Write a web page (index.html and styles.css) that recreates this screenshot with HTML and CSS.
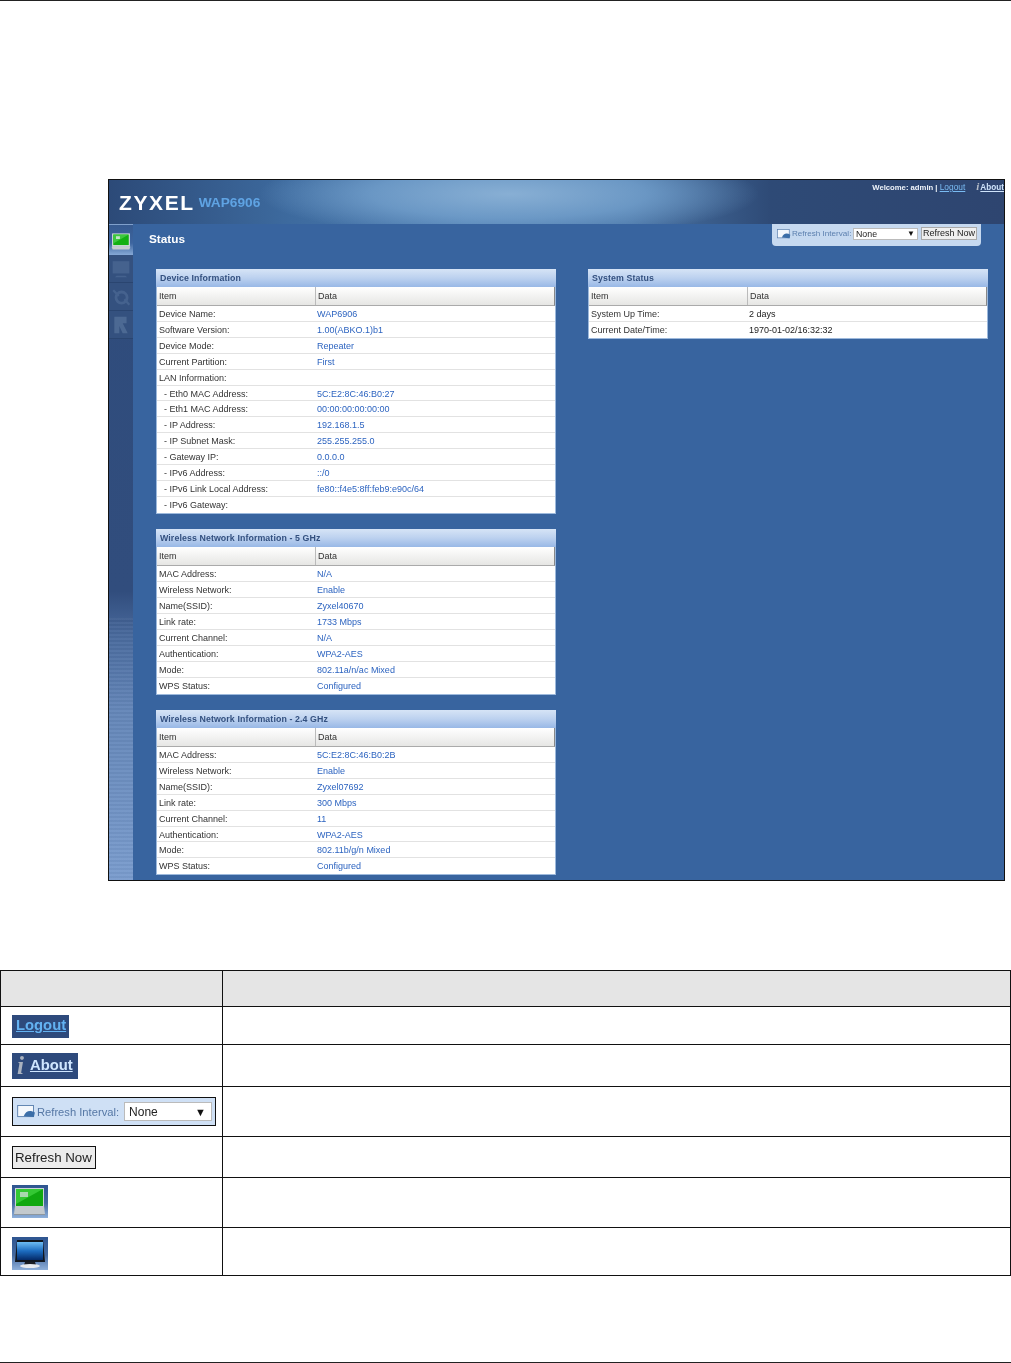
FILE: index.html
```html
<!DOCTYPE html>
<html lang="en">
<head>
<meta charset="utf-8">
<title>WAP6906 Status</title>
<link rel="stylesheet" href="styles.css">
</head>
<body>
<div class="page">
  <div class="top-rule"></div>
  <div class="shot">
    <header class="banner">
      <div class="brand"><span class="logo">ZYXEL</span><span class="model">WAP6906</span></div>
      <div class="welcome">Welcome: admin | <a class="lnk">Logout</a><span class="info">i</span><a class="about">About</a></div>
    </header>
    <div class="body">
      <aside class="side">
        <div class="nav nav-on">
          <svg width="20" height="19" viewBox="0 0 36 33"><rect x="2" y="2" width="32" height="24" fill="#d9dee2"/><rect x="4" y="4" width="28" height="19" fill="#12b012"/><path d="M4 4h28L4 20z" fill="#3fc83f"/><rect x="9" y="7" width="7" height="5" fill="#c3e4c8"/><path d="M1 26h34l-2 5H3z" fill="#c6ccd0"/></svg>
        </div>
        <div class="nav">
          <svg class="faint" width="20" height="22" viewBox="0 0 36 36"><rect x="3" y="4" width="30" height="22" fill="#56739e"/><path d="M10 30h16l3 3H7z" fill="#56739e"/></svg>
        </div>
        <div class="nav">
          <svg class="faint" width="20" height="22" viewBox="0 0 36 36"><circle cx="19" cy="19" r="10" fill="none" stroke="#56739e" stroke-width="5"/><path d="M4 6l10 10M24 22l9 10" stroke="#56739e" stroke-width="4"/></svg>
        </div>
        <div class="nav">
          <svg class="faint" width="20" height="22" viewBox="0 0 36 36"><path d="M6 3h22v12h-7l9 18h-9l-6-13v13H6z" fill="#6582a8"/></svg>
        </div>
      </aside>
      <main class="main">
        <div class="title-row">
          <h1 class="title">Status</h1>
          <div class="refresh">
            <svg class="ref-ico" width="14" height="10" viewBox="0 0 20 14"><rect x=".5" y=".5" width="17" height="12" fill="#f3f7fc" stroke="#5a7fae"/><path d="M7 12c2-6 7-7 12-4l-1 5z" fill="#3b6ea8"/></svg>
            <span class="ref-label">Refresh Interval:</span>
            <div class="sel"><span>None</span><span class="arrow">▼</span></div>
            <div class="btn">Refresh Now</div>
          </div>
        </div>
        <div class="cols">
          <div class="col">
            <section class="panel">
              <h2 class="panel-title">Device Information</h2>
              <div class="head"><div>Item</div><div>Data</div></div>
              <div class="row"><div>Device Name:</div><div class="val">WAP6906</div></div>
              <div class="row"><div>Software Version:</div><div class="val">1.00(ABKO.1)b1</div></div>
              <div class="row"><div>Device Mode:</div><div class="val">Repeater</div></div>
              <div class="row"><div>Current Partition:</div><div class="val">First</div></div>
              <div class="row"><div>LAN Information:</div><div class="val"></div></div>
              <div class="row"><div class="sub">- Eth0 MAC Address:</div><div class="val">5C:E2:8C:46:B0:27</div></div>
              <div class="row"><div class="sub">- Eth1 MAC Address:</div><div class="val">00:00:00:00:00:00</div></div>
              <div class="row"><div class="sub">- IP Address:</div><div class="val">192.168.1.5</div></div>
              <div class="row"><div class="sub">- IP Subnet Mask:</div><div class="val">255.255.255.0</div></div>
              <div class="row"><div class="sub">- Gateway IP:</div><div class="val">0.0.0.0</div></div>
              <div class="row"><div class="sub">- IPv6 Address:</div><div class="val">::/0</div></div>
              <div class="row"><div class="sub">- IPv6 Link Local Address:</div><div class="val">fe80::f4e5:8ff:feb9:e90c/64</div></div>
              <div class="row"><div class="sub">- IPv6 Gateway:</div><div class="val"></div></div>
            </section>
            <section class="panel">
              <h2 class="panel-title">Wireless Network Information - 5 GHz</h2>
              <div class="head"><div>Item</div><div>Data</div></div>
              <div class="row"><div>MAC Address:</div><div class="val">N/A</div></div>
              <div class="row"><div>Wireless Network:</div><div class="val">Enable</div></div>
              <div class="row"><div>Name(SSID):</div><div class="val">Zyxel40670</div></div>
              <div class="row"><div>Link rate:</div><div class="val">1733 Mbps</div></div>
              <div class="row"><div>Current Channel:</div><div class="val">N/A</div></div>
              <div class="row"><div>Authentication:</div><div class="val">WPA2-AES</div></div>
              <div class="row"><div>Mode:</div><div class="val">802.11a/n/ac Mixed</div></div>
              <div class="row"><div>WPS Status:</div><div class="val">Configured</div></div>
            </section>
            <section class="panel">
              <h2 class="panel-title">Wireless Network Information - 2.4 GHz</h2>
              <div class="head"><div>Item</div><div>Data</div></div>
              <div class="row"><div>MAC Address:</div><div class="val">5C:E2:8C:46:B0:2B</div></div>
              <div class="row"><div>Wireless Network:</div><div class="val">Enable</div></div>
              <div class="row"><div>Name(SSID):</div><div class="val">Zyxel07692</div></div>
              <div class="row"><div>Link rate:</div><div class="val">300 Mbps</div></div>
              <div class="row"><div>Current Channel:</div><div class="val">11</div></div>
              <div class="row"><div>Authentication:</div><div class="val">WPA2-AES</div></div>
              <div class="row"><div>Mode:</div><div class="val">802.11b/g/n Mixed</div></div>
              <div class="row"><div>WPS Status:</div><div class="val">Configured</div></div>
            </section>
          </div>
          <div class="col">
            <section class="panel">
              <h2 class="panel-title">System Status</h2>
              <div class="head"><div>Item</div><div>Data</div></div>
              <div class="row"><div>System Up Time:</div><div class="plain">2 days</div></div>
              <div class="row"><div>Current Date/Time:</div><div class="plain">1970-01-02/16:32:32</div></div>
            </section>
          </div>
        </div>
      </main>
    </div>
  </div>
  <div class="legend">
    <div class="lg-row lg-h1"><div class="lg-a"></div><div class="lg-b"></div></div>
    <div class="lg-row lg-h2"><div class="lg-a"><div class="chip chip-logout"><a>Logout</a></div></div><div class="lg-b"></div></div>
    <div class="lg-row lg-h3"><div class="lg-a"><div class="chip chip-about"><span class="chip-i">i</span><a>About</a></div></div><div class="lg-b"></div></div>
    <div class="lg-row lg-h4"><div class="lg-a"><div class="chip-refresh">
      <svg width="19" height="13" viewBox="0 0 20 14"><rect x=".5" y=".5" width="17" height="12" fill="#f3f7fc" stroke="#5a7fae"/><path d="M7 12c2-6 7-7 12-4l-1 5z" fill="#3b6ea8"/></svg>
      <span class="chip-label">Refresh Interval:</span>
      <div class="chip-sel"><span>None</span><span class="chip-arrow">▼</span></div>
    </div></div><div class="lg-b"></div></div>
    <div class="lg-row lg-h5"><div class="lg-a"><div class="chip-btn">Refresh Now</div></div><div class="lg-b"></div></div>
    <div class="lg-row lg-h6"><div class="lg-a">
      <svg class="mon" width="36" height="33" viewBox="0 0 36 33"><defs><linearGradient id="bgm" x1="0" y1="0" x2="0" y2="1"><stop offset="0" stop-color="#2e5590"/><stop offset=".55" stop-color="#44699f"/><stop offset="1" stop-color="#8fb0da"/></linearGradient></defs><rect width="36" height="33" fill="url(#bgm)"/><rect x="3" y="3" width="29" height="21" fill="#c9d2d6"/><rect x="4" y="4" width="27" height="17" fill="#10a810"/><path d="M4 4h27L4 19z" fill="#34c834"/><rect x="8" y="7" width="8" height="5" fill="#a9d8b0"/><path d="M3 21h29l1 8H2z" fill="#c3c9cd"/><path d="M2 29h31v1H2z" fill="#8e979e"/></svg>
    </div><div class="lg-b"></div></div>
    <div class="lg-row lg-h7"><div class="lg-a">
      <svg class="mon" width="36" height="33" viewBox="0 0 36 33"><defs><linearGradient id="bgd" x1="0" y1="0" x2="0" y2="1"><stop offset="0" stop-color="#2e5590"/><stop offset=".55" stop-color="#44699f"/><stop offset="1" stop-color="#8fb0da"/></linearGradient><linearGradient id="scr" x1="0" y1="0" x2="0" y2="1"><stop offset="0" stop-color="#6dbcf2"/><stop offset=".5" stop-color="#1c6cc0"/><stop offset="1" stop-color="#052a68"/></linearGradient></defs><rect width="36" height="33" fill="url(#bgd)"/><path d="M5 3h26l2 22H3z" fill="#10161e"/><rect x="5" y="5" width="26" height="18" fill="url(#scr)"/><path d="M13 25h10l1 3H12z" fill="#1a1d22"/><ellipse cx="18" cy="29" rx="10" ry="2" fill="#e8ebee"/></svg>
    </div><div class="lg-b"></div></div>
  </div>
  <div class="bottom-rule"></div>
</div>
</body>
</html>
```
FILE: styles.css
```css
* { box-sizing: border-box; }
html, body { margin: 0; padding: 0; background: #fff; }
body { font-family: "Liberation Sans", Arial, sans-serif; }
.page { width: 1011px; height: 1363px; display: flex; flex-direction: column; overflow: hidden; }
.top-rule { height: 1px; background: #222; flex: none; }
.shot { margin: 178px 0 0 108px; width: 897px; height: 702px; border: 1px solid #111; flex: none; display: flex; flex-direction: column; background: #38649f; overflow: hidden; }

.banner { height: 44px; flex: none; display: flex; justify-content: space-between; filter: blur(.3px); background: radial-gradient(ellipse 250px 44px at 400px 14px, #88afd4 0%, rgba(115,160,204,.8) 55%, rgba(60,95,145,0) 100%), linear-gradient(90deg, #2c4a78 0, #3d6a9e 20%, #4f7db0 40%, #4a75a6 58%, #2e4a76 74%, #2e4570 100%); }
.brand { display: flex; align-items: center; padding: 0 0 0 10px; }
.logo { font-size: 21px; font-weight: 700; color: #fff; letter-spacing: 1.6px; line-height: 1; }
.model { font-size: 13.7px; font-weight: 700; color: #5fa3e3; margin-left: 4px; }
.welcome { font-size: 7.7px; font-weight: 700; color: #eef3fa; padding-top: 2px; line-height: 9px; white-space: nowrap; }
.lnk { color: #79bbf2; text-decoration: underline; font-weight: 400; font-size: 8.4px; }
.about { color: #cfe4fb; text-decoration: underline; font-size: 8.2px; }
.info { font-family: "Liberation Serif", serif; font-style: italic; font-size: 11px; color: #b4bcc8; margin: 0 1px 0 11px; }

.body { flex: 1; display: flex; min-height: 0; }
.side { width: 24px; flex: none; display: flex; flex-direction: column; filter: blur(.4px); background: repeating-linear-gradient(180deg, rgba(255,255,255,.035) 0 2px, rgba(0,0,0,.03) 2px 4px) left bottom / 100% 40% no-repeat, linear-gradient(180deg, #2f4c7c 0, #314d7d 56%, #4a6b9e 63%, #6486b8 74%, #7a9ccd 100%); }
.nav { height: 28px; padding: 3px 0 0 2px; flex: none; border-bottom: 1px solid #2a4570; background: #34517f; }
.nav-on { height: 31px; padding-top: 7px; border-top: 1px solid #7fa0cc; background: linear-gradient(180deg, #365a90 0, #3d659f 60%, #86a9d6 100%); border-bottom: 0; }
.faint { opacity: .5; }

.main { flex: 1; padding: 0 16px 0 23px; min-width: 0; }
.title-row { height: 45px; display: flex; justify-content: space-between; align-items: flex-start; filter: blur(.25px); }
.title { margin: 8px 0 0 -7px; font-size: 11.8px; font-weight: 700; color: #fff; }
.refresh { width: 209px; height: 22px; display: flex; align-items: center; background: #c6d9f0; border-radius: 0 0 4px 4px; padding: 0 4px 3px 5px; margin-right: 7px; font-size: 8.1px; }
.ref-ico { flex: none; margin-right: 1px; }
.ref-label { color: #5b7fae; white-space: nowrap; width: 59px; flex: none; }
.sel { width: 65px; height: 12px; flex: none; background: #fff; border: 1px solid #bbb; display: flex; justify-content: space-between; align-items: center; padding: 0 2px; margin-left: 2px; color: #222; font-size: 8.8px; }
.arrow { font-size: 8px; color: #111; }
.btn { height: 13px; margin-left: 3px; width: 56px; flex: none; text-align: center; border: 1px solid #aaa; background: #efefef; color: #222; font-size: 9px; line-height: 11px; white-space: nowrap; overflow: hidden; }

.cols { display: flex; gap: 32px; filter: blur(.25px); }
.col { width: 400px; flex: none; display: flex; flex-direction: column; gap: 15.5px; }
.panel { background: #fff; border: 1px solid #9db9dc; border-top: 0; }
.panel-title { margin: 0 -1px; height: 18px; padding-left: 4px; font-size: 8.8px; font-weight: 700; line-height: 18px; color: #33507f; background: linear-gradient(180deg, #d6e4f6 0, #bcd1ef 50%, #98b8e6 100%); letter-spacing: .1px; }
.head { display: grid; grid-template-columns: 158px 1fr; height: 19px; background: linear-gradient(180deg, #fff, #e6e6e4); border-bottom: 1px solid #aaa; border-right: 1px solid #888; font-size: 9px; color: #333; }
.head > div { padding-left: 2px; line-height: 18px; }
.head > div + div { border-left: 1px solid #bbb; padding-left: 2px; }
.row { display: grid; grid-template-columns: 158px 1fr; height: 15.92px; padding-top: 1px; border-bottom: 1px solid #e2e2e2; font-size: 9px; line-height: 14px; color: #333; }
.row:last-child { border-bottom: 0; }
.row > div { padding-left: 2px; white-space: nowrap; }
.sub { text-indent: 5px; }
.val { color: #2d64c0; }
.plain { color: #222; }

.legend { margin-top: 89px; width: 1011px; flex: none; border: 1px solid #111; }
.lg-row { display: grid; grid-template-columns: 222px 1fr; border-bottom: 1px solid #111; }
.lg-row:last-child { border-bottom: 0; }
.lg-a { border-right: 1px solid #111; padding: 8px 0 0 11px; }
.lg-h1 { height: 36px; background: #e5e5e5; }
.lg-h2 { height: 38px; }
.lg-h3 { height: 42px; }
.lg-h4 { height: 50px; }
.lg-h5 { height: 41px; }
.lg-h6 { height: 50px; }
.lg-h7 { height: 47px; }
.chip { display: inline-flex; align-items: center; background: #2e4a7c; height: 23px; padding: 0 0 3px 4px; font-size: 14.8px; font-weight: 700; filter: blur(.3px); }
.chip a { color: #63b2f2; text-decoration: underline; }
.chip-logout { width: 57px; }
.chip-about { width: 66px; height: 26px; padding-left: 5px; }
.chip-about a { color: #cfe6ff; }
.chip-i { font-family: "Liberation Serif", serif; font-style: italic; font-weight: 700; font-size: 25px; line-height: 26px; color: #aab2bf; margin: 3px 6px 0 0; }
.lg-h4 .lg-a { padding: 10px 0 0 11px; }
.chip-refresh { width: 204px; height: 29px; display: flex; align-items: center; background: #cfe0f5; border: 1px solid #111; padding: 0 3px 0 4px; filter: blur(.2px); }
.chip-label { color: #5577a5; font-size: 11.2px; margin-left: 1px; white-space: nowrap; }
.chip-sel { width: 88px; height: 19px; background: #fff; border: 1px solid #bbb; margin-left: 5px; display: flex; justify-content: space-between; align-items: center; padding: 0 5px 0 4px; font-size: 12px; color: #222; }
.chip-arrow { font-size: 11px; color: #111; }
.lg-h5 .lg-a { padding: 9px 0 0 11px; }
.chip-btn { width: 84px; height: 23px; border: 1px solid #111; background: #ececec; font-size: 13.3px; line-height: 21px; padding-left: 2px; color: #222; white-space: nowrap; filter: blur(.2px); }
.lg-h6 .lg-a { padding: 7px 0 0 11px; }
.lg-h7 .lg-a { padding: 9px 0 0 11px; }
.mon { display: block; filter: blur(.3px); }
.bottom-rule { margin-top: auto; height: 1px; background: #222; flex: none; }
```
